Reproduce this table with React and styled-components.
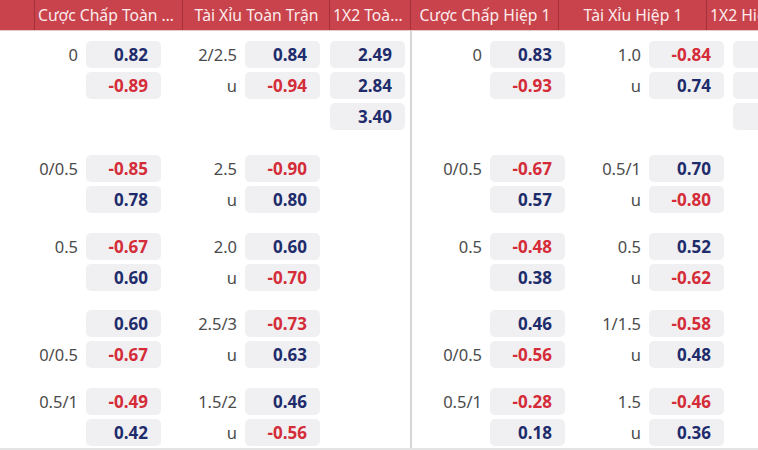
import React from 'react'
import styled, { createGlobalStyle } from 'styled-components'

const GlobalStyle = createGlobalStyle`
  html, body {
    margin: 0;
    padding: 0;
    background: #fff;
    overflow: hidden;
  }
  body {
    font-family: "Noto Sans", "Open Sans", Arial, sans-serif;
  }
`

const headers = [
  { title: '', w: 34 },
  { title: 'Cược Chấp Toàn Trận', w: 148 },
  { title: 'Tài Xỉu Toàn Trận', w: 147 },
  { title: '1X2 Toàn Trận', w: 81 },
  { title: 'Cược Chấp Hiệp 1', w: 148 },
  { title: 'Tài Xỉu Hiệp 1', w: 148 },
  { title: '1X2 Hiệp 1', w: 81 },
]

const matches = [
  {
    hdp: [['0', '0.82'], ['', '-0.89']],
    ou: [['2/2.5', '0.84'], ['u', '-0.94']],
    x12: ['2.49', '2.84', '3.40'],
    hdp1: [['0', '0.83'], ['', '-0.93']],
    ou1: [['1.0', '-0.84'], ['u', '0.74']],
    x121: ['3.15', '1.98', '4.10'],
  },
  {
    hdp: [['0/0.5', '-0.85'], ['', '0.78']],
    ou: [['2.5', '-0.90'], ['u', '0.80']],
    hdp1: [['0/0.5', '-0.67'], ['', '0.57']],
    ou1: [['0.5/1', '0.70'], ['u', '-0.80']],
  },
  {
    hdp: [['0.5', '-0.67'], ['', '0.60']],
    ou: [['2.0', '0.60'], ['u', '-0.70']],
    hdp1: [['0.5', '-0.48'], ['', '0.38']],
    ou1: [['0.5', '0.52'], ['u', '-0.62']],
  },
  {
    hdp: [['', '0.60'], ['0/0.5', '-0.67']],
    ou: [['2.5/3', '-0.73'], ['u', '0.63']],
    hdp1: [['', '0.46'], ['0/0.5', '-0.56']],
    ou1: [['1/1.5', '-0.58'], ['u', '0.48']],
  },
  {
    hdp: [['0.5/1', '-0.49'], ['', '0.42']],
    ou: [['1.5/2', '0.46'], ['u', '-0.56']],
    hdp1: [['0.5/1', '-0.28'], ['', '0.18']],
    ou1: [['1.5', '-0.46'], ['u', '0.36']],
  },
]

function Market({ rows }) {
  return (
    <MarketCol>
      {rows.map(([label, odd], i) => (
        <Line key={i}>
          <Label>{label}</Label>
          <Odd $neg={odd.startsWith('-')}>{odd}</Odd>
        </Line>
      ))}
    </MarketCol>
  )
}

function Triple({ odds, $side }) {
  return (
    <TripleCol $side={$side}>
      {odds && odds.map((o, i) => <Odd key={i}>{o}</Odd>)}
    </TripleCol>
  )
}

function App() {
  return (
    <>
      <GlobalStyle />
      <Table>
        <HeaderBar>
          {headers.map((h, i) => (
            <HeadCell key={i} $w={h.w} $first={i === 0}>{h.title}</HeadCell>
          ))}
        </HeaderBar>
        <Body>
          <Half $cols="165px 159px 86px">
            {matches.map((m, i) => (
              <Group key={i} $first={i === 0}>
                <Market rows={m.hdp} />
                <Market rows={m.ou} />
                <Triple odds={m.x12} $side="right" />
              </Group>
            ))}
          </Half>
          <Half $cols="157px 159px 1fr" $divider>
            {matches.map((m, i) => (
              <Group key={i} $first={i === 0}>
                <Market rows={m.hdp1} />
                <Market rows={m.ou1} />
                <Triple odds={m.x121} $side="left" />
              </Group>
            ))}
          </Half>
        </Body>
      </Table>
    </>
  )
}

export default App

const Table = styled.div`
  width: 758px;
  height: 450px;
  overflow: hidden;
  background: #fff;
`

const HeaderBar = styled.div`
  display: flex;
  height: 30px;
  background: #c8434b;
  border-bottom: 1px solid #e6c9cb;
  white-space: nowrap;
`

const HeadCell = styled.div`
  flex: 0 0 ${p => p.$w}px;
  box-sizing: border-box;
  border-left: ${p => (p.$first ? 'none' : '1px solid #a3313a')};
  padding: 0 2px 0 3px;
  color: #fdebed;
  font-size: 15.7px;
  line-height: 30px;
  text-align: center;
  overflow: hidden;
  text-overflow: ellipsis;
`

const Body = styled.div`
  display: flex;
  height: 417px;
  border-bottom: 2px solid #e4e4e4;
  overflow: hidden;
`

const Half = styled.div`
  display: flex;
  flex-direction: column;
  flex: ${p => (p.$divider ? '1 1 auto' : '0 0 410px')};
  border-left: ${p => (p.$divider ? '2px solid #d6d6d6' : 'none')};

  & > div {
    grid-template-columns: ${p => p.$cols};
  }
`

const Group = styled.div`
  display: grid;
  padding: 9.5px 0 ${p => (p.$first ? '16px' : '10px')};
`

const MarketCol = styled.div`
  display: flex;
  flex-direction: column;
  align-items: flex-end;
  gap: 4px;
  padding-right: 4px;
`

const TripleCol = styled.div`
  display: flex;
  flex-direction: column;
  align-items: ${p => (p.$side === 'left' ? 'flex-start' : 'flex-end')};
  gap: 4px;
  padding: ${p => (p.$side === 'left' ? '0 0 0 5px' : '0 5px 0 0')};
`

const Line = styled.div`
  display: flex;
  align-items: center;
  gap: 8px;
`

const Label = styled.span`
  color: #4b4b4b;
  font-size: 16.5px;
`

const Odd = styled.div`
  width: 75px;
  height: 27px;
  box-sizing: border-box;
  padding-right: 13px;
  border-radius: 5px;
  background: #f0f0f2;
  color: ${p => (p.$neg ? '#d42c38' : '#1f2c6c')};
  font-size: 17px;
  font-weight: 700;
  line-height: 27px;
  text-align: right;
`
